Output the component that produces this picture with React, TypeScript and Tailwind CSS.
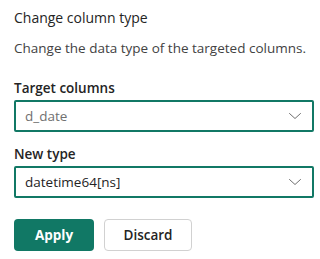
import React from 'react'

const Chevron: React.FC = () => (
  <svg width="16" height="16" viewBox="0 0 16 16" fill="none" className="text-[#707070]">
    <path d="M2.5 5.5 8 10.5 13.5 5.5" stroke="currentColor" strokeWidth="1" strokeLinecap="round" strokeLinejoin="round" />
  </svg>
)

const SelectBox: React.FC<{ value: string; muted?: boolean }> = ({ value, muted }) => (
  <div className="flex items-center justify-between h-[32px] w-[300px] border-2 border-[#117865] rounded-[2px] pl-[9px] pr-[9px]">
    <span className={muted ? 'text-[#707070]' : 'text-[#242424]'}>{value}</span>
    <Chevron />
  </div>
)

export default function App() {
  return (
    <div
      className="w-[320px] h-[259px] bg-white pl-[14px] pt-[8px] text-[13.5px] leading-[20px]"
      style={{ fontFamily: '"Open Sans", "Noto Sans", sans-serif' }}
    >
      <h2 className="text-[14px] text-[#242424] font-normal">Change column type</h2>
      <p className="mt-[10px] text-[#424242]">Change the data type of the targeted columns.</p>
      <div className="mt-[20px] font-semibold text-[#242424]">Target columns</div>
      <div className="mt-[2px]">
        <SelectBox value="d_date" muted />
      </div>
      <div className="mt-[12px] font-semibold text-[#242424]">New type</div>
      <div className="mt-[2px]">
        <SelectBox value="datetime64[ns]" />
      </div>
      <div className="mt-[21px] flex gap-[10px]">
        <button className="h-[32px] w-[80px] rounded-[4px] bg-[#117865] text-white font-bold">Apply</button>
        <button className="h-[32px] w-[88px] rounded-[4px] border border-[#d1d1d1] bg-white text-[#242424] font-semibold">
          Discard
        </button>
      </div>
    </div>
  )
}
